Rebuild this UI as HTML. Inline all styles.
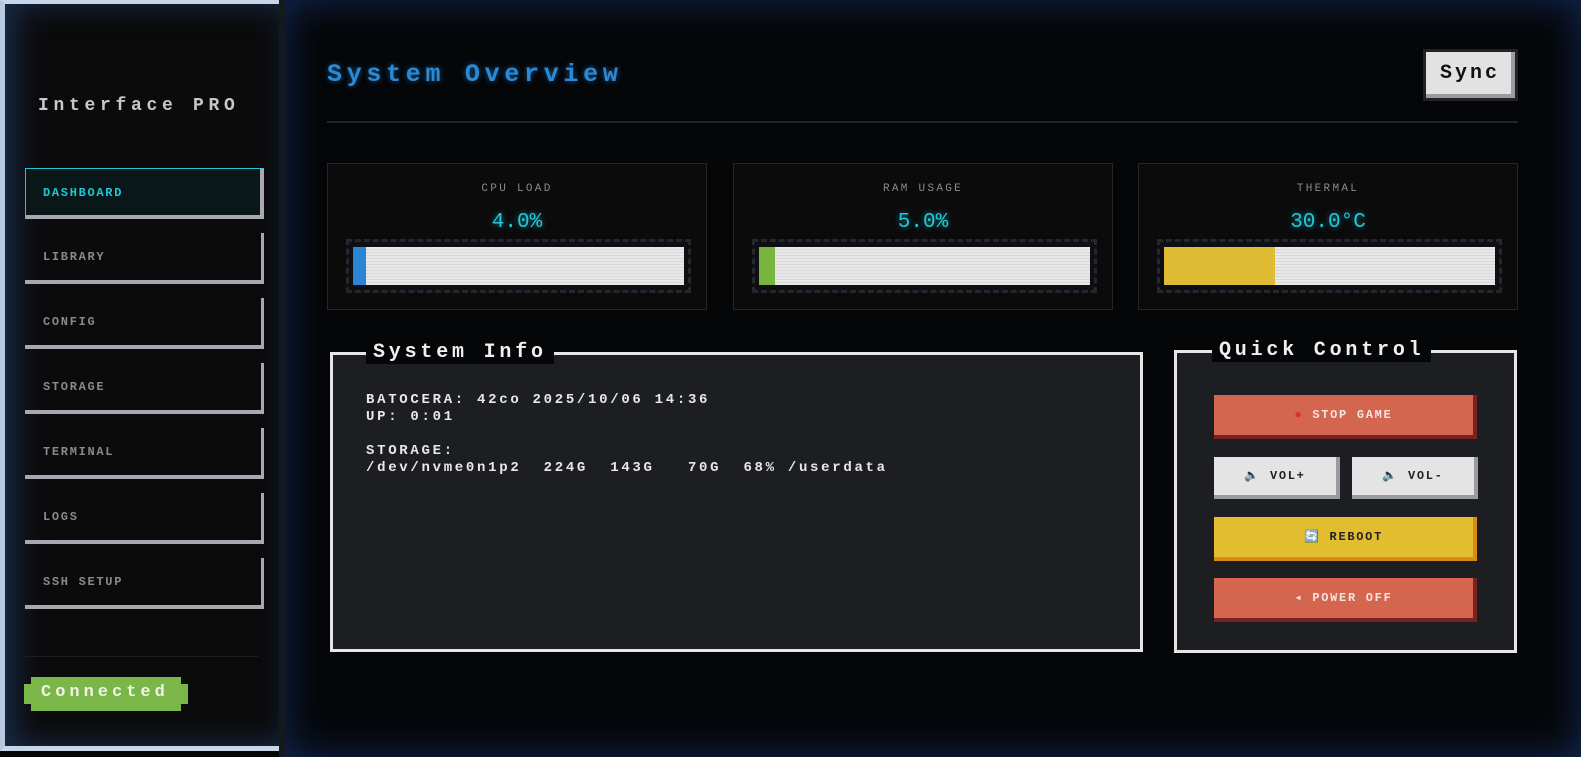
<!DOCTYPE html>
<html><head><meta charset="utf-8"><style>
*{box-sizing:border-box;margin:0;padding:0}
body{width:1581px;height:757px;overflow:hidden;background:#050608;font-family:"Liberation Mono","DejaVu Sans Mono",monospace;position:relative}
.main{position:absolute;left:279px;top:0;width:1302px;height:757px;background:#050608;box-shadow:inset 0 0 40px rgba(30,70,150,.55);border-left:6px solid #15181d}
.side{position:absolute;left:0;top:0;width:279px;height:751px;background:#0b0b0c;border-left:5px solid #b8c8e0;border-top:4px solid #c8d6ea;border-bottom:5px solid #c8d6ea;box-shadow:inset 10px 0 30px rgba(40,80,140,.5)}
.brand{position:absolute;left:33px;top:92px;color:#c8c8c8;font-size:18px;font-weight:bold;letter-spacing:4.7px}
.nav{position:absolute;left:20px;width:239px;height:51px;border-right:3px solid #a8a8b2;border-bottom:4px solid #a8a8b2;color:#8a8a8a;font-size:12px;font-weight:bold;padding:17px 0 0 18px;letter-spacing:1.7px}
.nav.act{border:1px solid #1fc6d6;border-right:4px solid #a8a8b2;border-bottom:4px solid #a8a8b2;background:#0a1719;color:#1fc6d6;padding-left:17px}
.div{position:absolute;left:19px;top:652px;width:234px;height:1px;background:#1e1e1e}
.conn{position:absolute;left:19px;top:673px;width:164px;height:34px;background:#7ab648;color:#eef5e6;font-size:17px;font-weight:bold;padding:6px 0 0 17px;letter-spacing:4px;clip-path:polygon(7px 0,calc(100% - 7px) 0,calc(100% - 7px) 7px,100% 7px,100% calc(100% - 7px),calc(100% - 7px) calc(100% - 7px),calc(100% - 7px) 100%,7px 100%,7px calc(100% - 7px),0 calc(100% - 7px),0 7px,7px 7px)}
.title{position:absolute;left:327px;top:60px;color:#2a8ad8;font-size:25px;font-weight:bold;letter-spacing:4.7px;text-shadow:0 0 6px rgba(42,138,216,.6)}
.hr{position:absolute;left:327px;top:121px;width:1191px;height:2px;background:#222428}
.sync{position:absolute;left:1426px;top:52px;width:89px;height:46px;background:#e2e2e2;border-right:4px solid #9a9aa4;border-bottom:4px solid #9a9aa4;outline:3px solid #222;color:#111;font-size:20px;font-weight:bold;text-align:center;line-height:44px;letter-spacing:3px;padding-left:3px}
.card{position:absolute;top:163px;width:380px;height:147px;background:#0b0b0c;border:1px solid #262626}
.card .l{position:absolute;top:19px;width:100%;text-align:center;color:#8a8a8a;font-size:11px;letter-spacing:2.3px}
.card .v{position:absolute;top:47px;width:100%;text-align:center;color:#22c8d8;font-size:21px;text-shadow:0 0 6px rgba(34,200,216,.6)}
.bar{position:absolute;left:18px;top:75px;width:345px;height:54px;background:#0d0f12;border:3px dashed #24272c}
.bar .in{position:absolute;left:4px;top:5px;right:4px;bottom:5px;background:repeating-linear-gradient(#e8e8e8 0 2px,#d8d8d8 2px 3px)}
.bar .f{position:absolute;left:0;top:0;bottom:0}
.panel{position:absolute;top:352px;height:300px;background:#1c1e21;border:3px solid #e6e6e6}
.leg{position:absolute;top:-14px;background:#050608;color:#f0f0f0;font-size:20px;font-weight:bold;padding:0 7px;letter-spacing:3.8px}
.info{position:absolute;left:33px;top:37px;color:#e8e8e8;font-size:14px;font-weight:bold;line-height:17px;white-space:pre;letter-spacing:2.7px}
.btn{position:absolute;height:44px;font-size:12px;font-weight:bold;text-align:center;line-height:40px;letter-spacing:1.7px}
.red{background:#d4664f;color:#f4e4df;border-right:4px solid #7a2020;border-bottom:4px solid #7a2020}
.wht{background:#e4e4e4;color:#222;border-right:4px solid #9a9aa4;border-bottom:4px solid #9a9aa4}
.yel{background:#e2bd30;color:#222;border-right:4px solid #d88a1a;border-bottom:4px solid #d88a1a}
</style></head><body>
<div class="side">
<div class="brand">Interface PRO</div>
<div class="nav act" style="top:164px">DASHBOARD</div>
<div class="nav" style="top:229px">LIBRARY</div>
<div class="nav" style="top:294px">CONFIG</div>
<div class="nav" style="top:359px">STORAGE</div>
<div class="nav" style="top:424px">TERMINAL</div>
<div class="nav" style="top:489px">LOGS</div>
<div class="nav" style="top:554px">SSH SETUP</div>
<div class="div"></div>
<div class="conn">Connected</div>
</div>
<div class="main"></div>
<div class="title">System Overview</div>
<div class="hr"></div>
<div class="sync">Sync</div>

<div class="card" style="left:327px"><div class="l">CPU LOAD</div><div class="v">4.0%</div><div class="bar"><div class="in"><div class="f" style="width:13px;background:#2a86d4"></div></div></div></div>
<div class="card" style="left:733px"><div class="l">RAM USAGE</div><div class="v">5.0%</div><div class="bar"><div class="in"><div class="f" style="width:16px;background:#78b43e"></div></div></div></div>
<div class="card" style="left:1138px"><div class="l">THERMAL</div><div class="v">30.0°C</div><div class="bar"><div class="in"><div class="f" style="width:111px;background:#e0bc34"></div></div></div></div>

<div class="panel" style="left:330px;width:813px"><div class="leg" style="left:33px">System Info</div>
<div class="info">BATOCERA: 42co 2025/10/06 14:36
UP: 0:01

STORAGE:
/dev/nvme0n1p2  224G  143G   70G  68% /userdata</div></div>

<div class="panel" style="left:1174px;width:343px;top:350px;height:303px"><div class="leg" style="left:35px">Quick Control</div></div>
<div class="btn red" style="left:1214px;top:395px;width:263px"><span style="color:#e03020">●</span> STOP GAME</div>
<div class="btn wht" style="left:1214px;top:457px;width:126px;height:42px;line-height:38px">🔈 VOL+</div>
<div class="btn wht" style="left:1352px;top:457px;width:126px;height:42px;line-height:38px">🔈 VOL-</div>
<div class="btn yel" style="left:1214px;top:517px;width:263px">🔄 REBOOT</div>
<div class="btn red" style="left:1214px;top:578px;width:263px">◂ POWER OFF</div>
</body></html>
